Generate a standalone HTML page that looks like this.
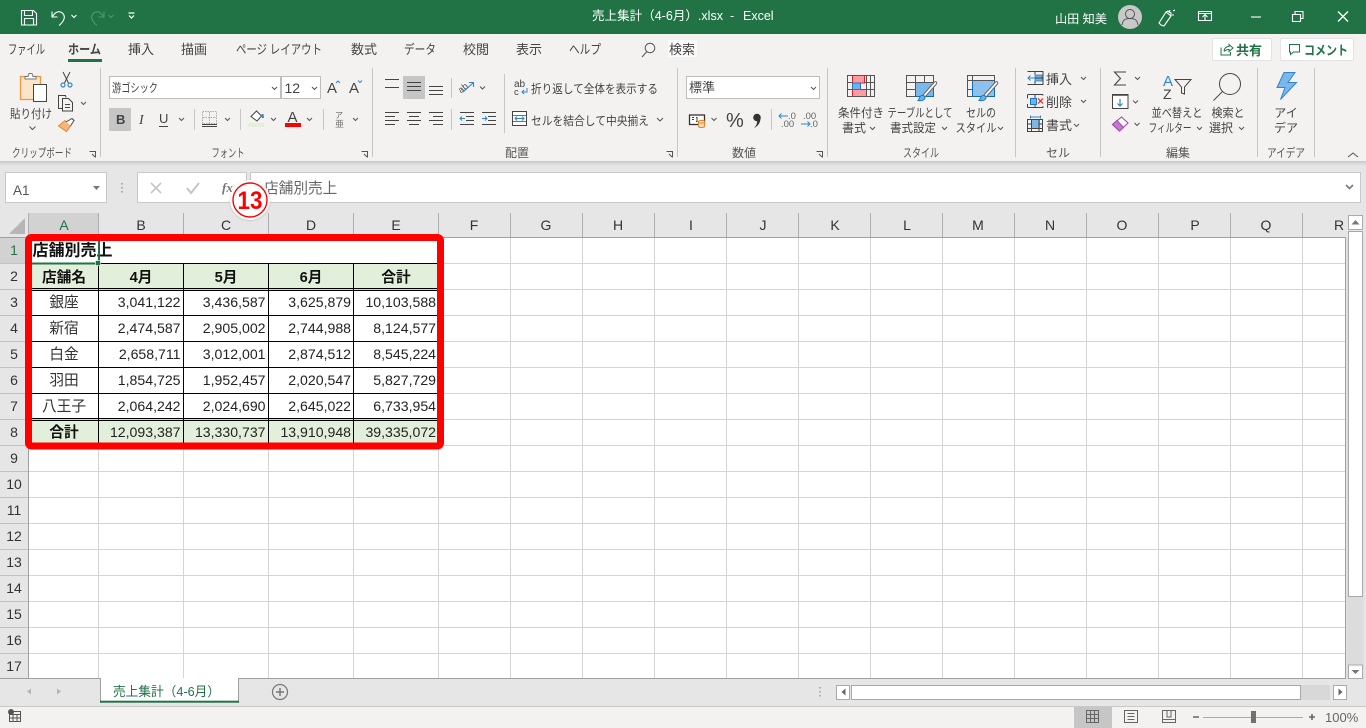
<!DOCTYPE html>
<html lang="ja"><head><meta charset="utf-8"><title>売上集計（4-6月）.xlsx - Excel</title>
<style>
html,body{margin:0;padding:0;width:1366px;height:728px;overflow:hidden;background:#fff}
svg{display:block}
text{font-family:"Liberation Sans","Noto Sans CJK JP",sans-serif;white-space:pre}
.r{font-size:12px;fill:#444}
.t{font-size:13px;fill:#444}
.g{font-size:12px;fill:#555;text-anchor:middle}
.m{font-size:12px;fill:#444;text-anchor:middle}
.h{font-size:14px;fill:#333;text-anchor:middle}
.rh{font-size:14px;fill:#333;text-anchor:middle}
.n{font-size:14.1px;fill:#222;text-anchor:end}
.c{font-size:14.67px;fill:#333;text-anchor:middle}
.b{font-size:14.67px;fill:#111;text-anchor:middle;font-weight:bold}
.w{fill:#fff;font-size:12px}
.l{stroke:#444;stroke-width:1;fill:none}
.v{stroke:#555;stroke-width:1;fill:none}
</style></head><body>
<svg width="1366" height="728" viewBox="0 0 1366 728" xmlns="http://www.w3.org/2000/svg">
<defs><linearGradient id="sh" x1="0" y1="0" x2="0" y2="1"><stop offset="0" stop-color="#c9c9c9"/><stop offset="1" stop-color="#e6e6e6"/></linearGradient>
<filter id="bl" x="-30%" y="-30%" width="160%" height="160%"><feGaussianBlur stdDeviation="1"/></filter></defs>
<!-- backgrounds -->
<rect width="1366" height="728" fill="#fff"/>
<rect y="0" width="1366" height="34" fill="#217346"/>
<rect y="34" width="1366" height="127" fill="#f3f2f1"/>
<rect y="161" width="1366" height="52" fill="#e6e6e6"/>
<rect y="161" width="1366" height="5" fill="url(#sh)"/>
<rect y="213" width="1366" height="24" fill="#e6e6e6"/>

<!-- title bar -->
<g fill="none" stroke="#fff" stroke-width="1.1">
<path d="M21.5 10.5h12l3 3v11.500h-15zM24.500 10.500v5h8v-5M24.500 25v-6.500h9V25"/>
<path d="M52 11.500v5.500h5.500M52.500 16.500c2.500-4 5.500-5.500 8-4.500 3 1 4.500 4 3.500 7-.7 2-2.500 4.500-5 6.500"/>
<path d="M71.500 15l2.500 2.500 2.500-2.500"/>
<g stroke="#4f9a6f"><path d="M104 11.500v5.500h-5.500M103.500 16.500c-2.500-4-5.500-5.500-8-4.500-3 1-4.500 4-3.500 7 .7 2 2.500 4.500 5 6.500"/><path d="M108.500 15l2.500 2.500 2.500-2.500"/></g>
<path d="M128.500 13h6M129 15.500l2.500 2.500 2.500-2.500" stroke-width="1.200"/>
</g>
<text x="592" y="20" fill="#fff" font-size="12.500" textLength="131" lengthAdjust="spacingAndGlyphs">売上集計（4-6月）.xlsx</text>
<text x="730" y="20" fill="#fff" font-size="12.500">-</text>
<text x="743" y="20" fill="#fff" font-size="12.500">Excel</text>
<text x="1055" y="23" class="w" textLength="52" lengthAdjust="spacingAndGlyphs">山田 知美</text>
<circle cx="1130" cy="17" r="12" fill="#c8c8c8"/>
<circle cx="1130" cy="14" r="4.500" fill="none" stroke="#555" stroke-width="1"/>
<path d="M1122 25c1-6 4-6.500 8-6.500s7 .5 8 6.500" fill="none" stroke="#555"/>
<g fill="none" stroke="#fff" stroke-width="1.100">
<path d="M1161 25l-2-2 7-11 5 4-7 10zM1166 12l2-1 3 2 0 3M1169 13l1-3M1173 11l2-1M1172 15l2 0"/>
<path d="M1198.500 11.500h13v9h-13zM1198.500 13.500h13M1205 20v-5M1202.500 17l2.500-2.500 2.500 2.500"/>
<path d="M1251 17h10" />
<path d="M1292.500 14.500h8v7h-8zM1295 14.500v-3h8v7h-2.500"/>
<path d="M1338 11.500l10 10M1348 11.500l-10 10" stroke-width="1.300"/>
</g>

<!-- tabs -->
<text x="8" y="54" class="t" textLength="37" lengthAdjust="spacingAndGlyphs">ファイル</text>
<text x="68" y="54" class="t" font-weight="bold" textLength="33" lengthAdjust="spacingAndGlyphs">ホーム</text>
<rect x="68" y="59" width="34" height="3" fill="#217346"/>
<text x="128" y="54" class="t">挿入</text>
<text x="181" y="54" class="t">描画</text>
<text x="236" y="54" class="t" textLength="86" lengthAdjust="spacingAndGlyphs">ページ レイアウト</text>
<text x="351" y="54" class="t">数式</text>
<text x="404" y="54" class="t" textLength="32" lengthAdjust="spacingAndGlyphs">データ</text>
<text x="463" y="54" class="t">校閲</text>
<text x="516" y="54" class="t">表示</text>
<text x="569" y="54" class="t" textLength="32" lengthAdjust="spacingAndGlyphs">ヘルプ</text>
<circle cx="650" cy="48" r="4.800" fill="none" stroke="#555"/><path d="M646.500 52l-4.500 5" stroke="#555" fill="none"/>
<rect x="668" y="40" width="29" height="17" fill="#fafafa"/>
<text x="669" y="54" class="t">検索</text>
<!-- share/comment -->
<rect x="1212.500" y="38.500" width="59" height="22" fill="#fff" stroke="#e3e3e3" rx="1"/>
<rect x="1280.500" y="38.500" width="73" height="22" fill="#fff" stroke="#e3e3e3" rx="1"/>
<path d="M1221 47.500v7.500h9.500v-3M1224 51c.5-3 2.500-4.500 5-4.500v-2l4 3.500-4 3.500v-2c-2 0-3.500 .5-5 2" fill="none" stroke="#217346"/>
<text x="1236" y="55" font-size="13" font-weight="bold" fill="#217346">共有</text>
<path d="M1289.500 44.500h10v7.500h-6l-3 2.500v-2.500h-1z" fill="none" stroke="#217346"/>
<text x="1304" y="55" font-size="13" font-weight="bold" fill="#217346" textLength="44" lengthAdjust="spacingAndGlyphs">コメント</text>

<!-- separators -->
<g stroke="#c8c6c4"><path d="M100.500 68v89M372.500 68v89M677.500 68v89M827.500 68v89M1015.500 68v89M1100.500 68v89M1257.500 68v89M1314.500 68v89M194.500 109v21M240.500 109v21M323.500 109v21M504.500 74v59M771.500 109v21M451.500 78v20M451.500 109v21"/></g>

<!-- clipboard -->
<rect x="20.500" y="76.500" width="20" height="23" fill="#fbe4c8" stroke="#ed9a3f" stroke-width="1.300"/>
<path d="M25 76.500h3l1-3h3l1 3h3v2.500H25z" fill="#fff" stroke="#777"/>
<rect x="33.500" y="84.500" width="13" height="17" fill="#fff" stroke="#444"/>
<text x="10" y="118" class="r" textLength="42" lengthAdjust="spacingAndGlyphs">貼り付け</text>
<path class="v" d="M29.500 126.500l3 3 3-3"/>
<g fill="none" stroke="#444"><path d="M63 72l5.500 11M70 72l-5.500 11"/></g>
<g fill="none" stroke="#2e86cf" stroke-width="1.200"><circle cx="63" cy="85" r="2"/><circle cx="70" cy="85" r="2"/></g>
<path class="l" d="M62 108.500h-3.500v-13h7l.5 2M62.500 98.500h6l4 4v8.500h-10zM65 104.500h5M65 107.500h5"/>
<path class="v" d="M81 102l2.500 2.500 2.500-2.500"/>
<path d="M58.500 126l6.500-5.500 5.500 5.500-4 5.500z" fill="#f5b77b" stroke="#e8892b"/>
<path d="M66 122l6-3.500 2 2-3.500 5.500" fill="#fff" stroke="#444"/>
<text x="42" y="157" class="g" textLength="60" lengthAdjust="spacingAndGlyphs">クリップボード</text>
<g class="v"><path d="M89.500 151.500h6v6M92 154l3 3"/><path d="M361.500 151.500h6v6M364 154l3 3M666.500 151.500h6v6M669 154l3 3M816.500 151.500h6v6M819 154l3 3"/></g>

<!-- font -->
<rect x="109.500" y="76.500" width="171" height="22" fill="#fff" stroke="#bdbdbd"/>
<rect x="281.500" y="76.500" width="39" height="22" fill="#fff" stroke="#bdbdbd"/>
<text x="112" y="92" class="r" textLength="46" lengthAdjust="spacingAndGlyphs">游ゴシック</text>
<text x="284.500" y="93" font-size="14" fill="#444">12</text>
<path class="v" d="M272 87l2.500 2.500 2.500-2.500M312 87l2.500 2.500 2.500-2.500"/>
<text x="327" y="93" font-size="15" fill="#444">A</text><path d="M336 83l2-2 2 2" fill="none" stroke="#2e86cf"/>
<text x="349" y="93" font-size="15" fill="#444">A</text><path d="M358 80.500l2 2 2-2" fill="none" stroke="#2e86cf"/>
<rect x="109" y="108" width="22" height="23" fill="#c6c6c6"/>
<text x="116" y="124" font-size="13" font-weight="bold" fill="#444">B</text>
<text x="139" y="124" font-size="14" font-style="italic" fill="#444" style="font-family:'Liberation Serif',serif">I</text>
<text x="159" y="123" font-size="13" fill="#444">U</text><path d="M159 126.500h9" stroke="#444"/>
<path class="v" d="M179 118l2.500 2.500 2.500-2.500M225 118l2.500 2.500 2.500-2.500M271 118l2.500 2.500 2.500-2.500M307 118l2.500 2.500 2.500-2.500M353 118l2.500 2.500 2.500-2.500"/>
<path d="M202.500 111.500h14v12h-14zM209.500 112v11M203 117.500h13" fill="none" stroke="#aaa" stroke-dasharray="1.500 1"/>
<path d="M202 124.500h15M202 126.500h15" stroke="#444"/>
<path d="M251 116.500l5.500-5.500 5 5-4.500 5z" fill="#fff" stroke="#444"/><path d="M262.500 114l.5 4" stroke="#2e86cf" stroke-width="2"/>
<rect x="248" y="123" width="16" height="4" fill="#e2efda"/>
<text x="287.500" y="122" font-size="15" fill="#444">A</text><rect x="285" y="123" width="16" height="4" fill="#f00"/>
<text x="335" y="118" font-size="8" fill="#666">ア</text><text x="335" y="127" font-size="9" fill="#777">亜</text>
<text x="228" y="157" class="g" textLength="33" lengthAdjust="spacingAndGlyphs">フォント</text>

<!-- alignment -->
<rect x="403" y="76" width="22" height="23" fill="#c6c6c6"/>
<g stroke="#444"><path d="M385 79.500h14M385 87.500h14M407 82.500h14M407 86.500h14M407 90.500h14M429 86.500h14M429 90.500h14M429 94.500h14"/>
<path d="M385 112.500h14M385 116.500h10M385 120.500h14M385 124.500h10M407 112.500h14M409 116.500h10M407 120.500h14M409 124.500h10M429 112.500h14M433 116.500h10M429 120.500h14M433 124.500h10"/>
<path d="M460 112.500h14M466 116.500h8M466 120.500h8M460 124.500h14M482 112.500h14M488 116.500h8M488 120.500h8M482 124.500h14"/></g>
<path d="M465 118.500h-5M462 116.500l-2 2 2 2M482 118.500h5M485 116.500l2 2-2 2" fill="none" stroke="#2e86cf"/>
<text x="459" y="92" font-size="9" fill="#444" transform="rotate(-40 462 90)">ab</text>
<path d="M463 92l10-9M469 82.500h4.500v4.500" fill="none" stroke="#2e86cf" stroke-width="1.100"/>
<path class="v" d="M480 86.500l2.500 2.500 2.500-2.500"/>
<text x="514" y="87" font-size="10" fill="#444">ab</text><text x="514" y="95" font-size="9.500" fill="#444">c</text>
<path d="M527 88v4h-5M524 90l-2 2 2 2" fill="none" stroke="#2e86cf"/>
<text x="531" y="93" class="r" textLength="127" lengthAdjust="spacingAndGlyphs">折り返して全体を表示する</text>
<rect x="512.500" y="111.500" width="14" height="14" fill="#fff" stroke="#444"/>
<path d="M513 115.500h13M513 121.500h13" stroke="#2e86cf"/><path d="M515 118.500h9M517 116.500l-2 2 2 2M522 116.500l2 2-2 2" fill="none" stroke="#2e86cf"/>
<text x="531" y="125" class="r" textLength="118" lengthAdjust="spacingAndGlyphs">セルを結合して中央揃え</text>
<path class="v" d="M657 118l3 3 3-3"/>
<text x="517" y="157" class="g">配置</text>

<!-- number -->
<rect x="686.500" y="76.500" width="133" height="22" fill="#fff" stroke="#bdbdbd"/>
<text x="689" y="92" font-size="13" fill="#444">標準</text>
<path class="v" d="M811 87l2.500 2.500 2.500-2.500"/>
<rect x="689.500" y="115" width="15" height="9.500" fill="#fff" stroke="#333" stroke-width="1.300"/>
<path d="M692 117.500h2M696 117.500h1v4h-1M692 119.500h2" stroke="#444" fill="none"/>
<rect x="698.500" y="120.500" width="6" height="7" rx="1.500" fill="#fbd9b5" stroke="#e8892b"/><path d="M698.500 123h6" stroke="#e8892b"/>
<path class="v" d="M711.500 118l2.500 2.500 2.500-2.500"/>
<text x="726" y="127" font-size="20" fill="#444">%</text>
<circle cx="757" cy="117.500" r="3.800" fill="#333"/><path d="M760.500 117c.3 5-2 9-6.500 11 2.500-2.500 3.500-5 3-8z" fill="#333"/>
<text x="788" y="119" font-size="9.500" fill="#666">.0</text><text x="781" y="127" font-size="9.500" fill="#666">.00</text>
<path d="M779 116h9M781.500 113.500l-2.500 2.500 2.500 2.500" fill="none" stroke="#2e86cf"/>
<text x="803" y="119" font-size="9.500" fill="#666">.00</text><text x="810" y="127" font-size="9.500" fill="#666">.0</text>
<path d="M801 124h9M807.500 121.500l2.500 2.500-2.500 2.500" fill="none" stroke="#2e86cf"/>
<text x="744" y="157" class="g">数値</text>

<!-- styles -->
<rect x="852.500" y="75.500" width="12" height="7.500" fill="#ff9aa2" stroke="#d22"/><rect x="852.500" y="89.500" width="14" height="7" fill="#ff9aa2" stroke="#d22"/>
<rect x="852.500" y="83" width="8" height="6.500" fill="#6fb3e6" stroke="#1f78c4"/>
<path d="M847.500 75.500h27v21h-27zM847.500 82.500h5M865 82.500h9.500M847.500 89.500h5M861 89.500h13.500M866.500 75.500v21M870.500 75.500v21" fill="none" stroke="#555"/>
<text x="861" y="117" class="m" textLength="46" lengthAdjust="spacingAndGlyphs">条件付き</text>
<text x="854" y="132" class="m">書式</text><path class="v" d="M870 127l2.500 2.500 2.500-2.500"/>
<rect x="915.500" y="82.500" width="18" height="14" fill="#7ab8ea" stroke="#0f6cbd"/>
<path d="M906.500 75.500h27v7h-27zM906.500 82.500v14h9M906.500 89.500h9M915.500 75.500v21M924.500 75.500v7" fill="none" stroke="#555"/>
<path d="M923 95l11-12.500c1-1 2-1 2.500-.5s.5 1.500-.5 2.500L925 97z" fill="#fff" stroke="#666"/>
<path d="M918 100.500c3 .5 6 .5 7-2.500.3-1.500-1-2.500-3-2.500-2.500 0-2 3-4 5z" fill="#6fb3e6" stroke="#1f78c4"/>
<text x="920" y="117" class="m" textLength="65" lengthAdjust="spacingAndGlyphs">テーブルとして</text>
<text x="913" y="132" class="m" textLength="46" lengthAdjust="spacingAndGlyphs">書式設定</text><path class="v" d="M942 127l2.500 2.500 2.500-2.500"/>
<rect x="972.500" y="80.500" width="22" height="16" fill="#8cc1ee" stroke="#0f6cbd"/>
<path d="M967.500 75.500h27v5h-27zM967.500 80.500v16h5M967.500 89.500h5M972.500 75.500v5" fill="none" stroke="#555"/>
<path d="M984 95l11-12.500c1-1 2-1 2.500-.5s.5 1.500-.5 2.500L986 97z" fill="#fff" stroke="#666"/>
<path d="M979 100.500c3 .5 6 .5 7-2.500.3-1.500-1-2.500-3-2.500-2.500 0-2 3-4 5z" fill="#6fb3e6" stroke="#1f78c4"/>
<text x="981" y="117" class="m" textLength="30" lengthAdjust="spacingAndGlyphs">セルの</text>
<text x="976" y="132" class="m" textLength="41" lengthAdjust="spacingAndGlyphs">スタイル</text><path class="v" d="M998 127l2.500 2.500 2.500-2.500"/>
<text x="921" y="157" class="g" textLength="36" lengthAdjust="spacingAndGlyphs">スタイル</text>

<!-- cells -->
<rect x="1035" y="75" width="7" height="6" fill="#6fb3e6" stroke="#1f78c4" stroke-width=".7"/>
<path d="M1027.500 71.500h15.500v13h-15.500M1033 78h10M1035 71.500v3M1035 81v3.500" fill="none" stroke="#444"/>
<path d="M1035 78h-7M1030.500 75.500l-2.500 2.500 2.500 2.500" fill="none" stroke="#2e86cf"/>
<text x="1046" y="84" font-size="13" fill="#444">挿入</text><path class="v" d="M1081 77l2.500 2.500 2.500-2.500"/>
<path d="M1027.500 94.500h15.500M1027.500 107.500h15.500M1027.500 94.500v4M1027.500 104v3.500M1035 94.500v4M1035 104v3.500M1043 94.500v1M1043 106v1.500" fill="none" stroke="#444"/>
<rect x="1030.500" y="98.500" width="6" height="6" fill="#6fb3e6" stroke="#1f78c4"/>
<path d="M1038 98.500l5 5M1043 98.500l-5 5" stroke="#e33" stroke-width="1.300"/>
<text x="1046" y="107" font-size="13" fill="#444">削除</text><path class="v" d="M1081 100l2.500 2.500 2.500-2.500"/>
<rect x="1031" y="120" width="9" height="9" fill="#7ab8ea"/>
<path d="M1027.500 119.500h15v12h-15zM1027.500 124h4M1039 124h3.500M1027.500 128.500h15M1031.500 119.500v12M1039 119.500v12" fill="none" stroke="#444"/>
<path d="M1030.500 117h10M1030.500 115.500v3M1040.500 115.500v3" stroke="#2e86cf" fill="none"/>
<text x="1046" y="130" font-size="13" fill="#444">書式</text><path class="v" d="M1074 124l2.500 2.500 2.500-2.500"/>
<text x="1058" y="157" class="g">セル</text>

<!-- editing -->
<path d="M1126 72h-11.500l6 6.500-6 6.500h11.500" fill="none" stroke="#444" stroke-width="1.100"/>
<path class="v" d="M1135 77l2.500 2.500 2.500-2.500"/>
<rect x="1112.500" y="94.500" width="15.500" height="14" fill="#fff" stroke="#444"/><path d="M1112 95h16.500" stroke="#444" stroke-width="1.500"/>
<path d="M1120 99v7M1117.500 103.500l2.500 2.500 2.500-2.500" fill="none" stroke="#2e86cf" stroke-width="1.200"/>
<path class="v" d="M1133 100.500l2.500 2.500 2.500-2.500"/>
<path d="M1112.500 124.500l9-7.500 6.500 6-8.500 8z" fill="#fff" stroke="#a34cb0" stroke-width="1.100"/><path d="M1112.500 124.500l4.500-4 6.500 7-4 3.500z" fill="#c478cf" stroke="#a34cb0" stroke-width="1.100"/>
<path class="v" d="M1134.500 123l2.500 2.500 2.500-2.500"/>
<text x="1163" y="86" font-size="15" fill="#2e86cf">A</text><text x="1163" y="99" font-size="14" fill="#444">Z</text>
<path d="M1175 79.500h16l-6.500 7.500v7l-3-1v-6z" fill="none" stroke="#444"/>
<text x="1177" y="117" class="m" textLength="51" lengthAdjust="spacingAndGlyphs">並べ替えと</text>
<text x="1170" y="132" class="m" textLength="43" lengthAdjust="spacingAndGlyphs">フィルター</text><path class="v" d="M1197 127l2.500 2.500 2.500-2.500"/>
<circle cx="1230" cy="84" r="10.500" fill="none" stroke="#444"/><path d="M1222.500 91.500l-9 9" stroke="#444" fill="none"/>
<text x="1228" y="117" class="m" textLength="33" lengthAdjust="spacingAndGlyphs">検索と</text>
<text x="1221" y="132" class="m">選択</text><path class="v" d="M1239 127l2.500 2.500 2.500-2.500"/>
<text x="1178" y="157" class="g">編集</text>

<!-- ideas -->
<path d="M1284 72.500h11l-7 10h8.500l-16 17 4.500-12h-8z" fill="#7ab8ea" stroke="#2e86cf"/>
<text x="1286" y="117" class="m">アイ</text><text x="1286" y="132" class="m">デア</text>
<text x="1286" y="157" class="g" textLength="38" lengthAdjust="spacingAndGlyphs">アイデア</text>
<path d="M1348 157l5-4 5 4" fill="none" stroke="#555"/>

<!-- formula bar -->
<rect x="5.500" y="172.500" width="101" height="30" fill="#fff" stroke="#c8c8c8"/>
<text x="13" y="195" font-size="13.500" fill="#555">A1</text>
<path d="M93 186h7l-3.500 4z" fill="#777"/>
<path d="M122 183v1.500M122 187v1.500M122 191v1.500" stroke="#999" stroke-width="1.500"/>
<rect x="137.500" y="172.500" width="109" height="30" fill="#fff" stroke="#c8c8c8"/>
<rect x="250.500" y="172.500" width="1110" height="30" fill="#fff" stroke="#c8c8c8"/>
<path d="M151 183l10 10M161 183l-10 10" stroke="#c4c4c4" stroke-width="1.600"/>
<path d="M187 188l4 5 8-10" fill="none" stroke="#c4c4c4" stroke-width="2"/>
<text x="222" y="192" font-size="13" font-style="italic" font-weight="bold" fill="#777" style="font-family:'Liberation Serif',serif">fx</text>
<text x="264" y="193" font-size="14.670" fill="#666">店舗別売上</text>
<path d="M1346 185l3.500 3.500 3.500-3.500" fill="none" stroke="#777" stroke-width="1.600"/>

<!-- column headers -->
<rect x="29" y="213" width="70" height="24" fill="#d2d2d2"/>
<path d="M9 234l16-16v16z" fill="#b6b6b6"/>
<g stroke="#afafaf"><path d="M28.500 213v24M98.500 213v24M183.500 213v24M268.500 213v24M353.500 213v24M438.500 213v24M510.500 213v24M582.500 213v24M654.500 213v24M726.500 213v24M798.500 213v24M870.500 213v24M942.500 213v24M1014.500 213v24M1086.500 213v24M1158.500 213v24M1230.500 213v24M1302.500 213v24"/></g>
<text x="64" y="230" class="h" style="fill:#217346">A</text>
<text x="141" y="230" class="h">B</text><text x="226" y="230" class="h">C</text><text x="311" y="230" class="h">D</text><text x="396" y="230" class="h">E</text>
<text x="474" y="230" class="h">F</text><text x="546" y="230" class="h">G</text><text x="618" y="230" class="h">H</text><text x="691" y="230" class="h">I</text><text x="763" y="230" class="h">J</text><text x="835" y="230" class="h">K</text><text x="907" y="230" class="h">L</text><text x="978" y="230" class="h">M</text><text x="1050" y="230" class="h">N</text><text x="1122" y="230" class="h">O</text><text x="1195" y="230" class="h">P</text><text x="1266" y="230" class="h">Q</text><text x="1339" y="230" class="h">R</text>

<!-- row headers -->
<rect x="0" y="237" width="28" height="442" fill="#e6e6e6"/>
<rect x="0" y="237" width="28" height="26" fill="#d2d2d2"/>
<g stroke="#c2c2c2"><path d="M0 263.500h28M0 289.500h28M0 315.500h28M0 341.500h28M0 367.500h28M0 393.500h28M0 419.500h28M0 445.500h28M0 471.500h28M0 497.500h28M0 523.500h28M0 549.500h28M0 575.500h28M0 601.500h28M0 627.500h28M0 653.500h28"/></g>
<text x="14" y="255" class="rh" style="fill:#217346">1</text><text x="14" y="281" class="rh">2</text><text x="14" y="307" class="rh">3</text><text x="14" y="333" class="rh">4</text><text x="14" y="359" class="rh">5</text><text x="14" y="385" class="rh">6</text><text x="14" y="411" class="rh">7</text><text x="14" y="437" class="rh">8</text><text x="14" y="463" class="rh">9</text><text x="14" y="489" class="rh">10</text><text x="14" y="515" class="rh">11</text><text x="14" y="541" class="rh">12</text><text x="14" y="567" class="rh">13</text><text x="14" y="593" class="rh">14</text><text x="14" y="619" class="rh">15</text><text x="14" y="645" class="rh">16</text><text x="14" y="671" class="rh">17</text>

<!-- grid -->
<g stroke="#d4d4d4"><path d="M98.500 237v442M183.500 237v442M268.500 237v442M353.500 237v442M438.500 237v442M510.500 237v442M582.500 237v442M654.500 237v442M726.500 237v442M798.500 237v442M870.500 237v442M942.500 237v442M1014.500 237v442M1086.500 237v442M1158.500 237v442M1230.500 237v442M1302.500 237v442"/>
<path d="M29 263.500h1316M29 289.500h1316M29 315.500h1316M29 341.500h1316M29 367.500h1316M29 393.500h1316M29 419.500h1316M29 445.500h1316M29 471.500h1316M29 497.500h1316M29 523.500h1316M29 549.500h1316M29 575.500h1316M29 601.500h1316M29 627.500h1316M29 653.500h1316"/></g>
<path d="M0 237.500h1345.500M28.500 237v442M1345.500 237v442" stroke="#a0a0a0" fill="none"/>

<!-- table -->
<rect x="29" y="263" width="410" height="26" fill="#e2efda"/>
<rect x="29" y="420" width="410" height="25" fill="#e2efda"/>
<rect x="29" y="237" width="410" height="26" fill="#fff"/>
<rect x="29" y="290" width="410" height="129" fill="#fff"/>
<g stroke="#000"><path d="M29 263.500h410M29 288.500h410M29 290.500h410M29 315.500h410M29 341.500h410M29 367.500h410M29 393.500h410M29 418.500h410M29 420.500h410M29 445.500h410"/>
<path d="M98.500 263v182M183.500 263v182M268.500 263v182M353.500 263v182"/></g>
<text x="32.500" y="255.500" font-size="16" font-weight="bold" fill="#111">店舗別売上</text>
<text x="64" y="282" class="b">店舗名</text><text x="141" y="282" class="b">4月</text><text x="226" y="282" class="b">5月</text><text x="311" y="282" class="b">6月</text><text x="396" y="282" class="b">合計</text>
<text x="64" y="307" class="c">銀座</text><text x="64" y="333" class="c">新宿</text><text x="64" y="359" class="c">白金</text><text x="64" y="385" class="c">羽田</text><text x="64" y="411" class="c">八王子</text><text x="64" y="437" class="b">合計</text>
<text x="180.500" y="307" class="n">3,041,122</text><text x="265.500" y="307" class="n">3,436,587</text><text x="351" y="307" class="n">3,625,879</text><text x="436" y="307" class="n">10,103,588</text>
<text x="180.500" y="333" class="n">2,474,587</text><text x="265.500" y="333" class="n">2,905,002</text><text x="351" y="333" class="n">2,744,988</text><text x="436" y="333" class="n">8,124,577</text>
<text x="180.500" y="359" class="n">2,658,711</text><text x="265.500" y="359" class="n">3,012,001</text><text x="351" y="359" class="n">2,874,512</text><text x="436" y="359" class="n">8,545,224</text>
<text x="180.500" y="385" class="n">1,854,725</text><text x="265.500" y="385" class="n">1,952,457</text><text x="351" y="385" class="n">2,020,547</text><text x="436" y="385" class="n">5,827,729</text>
<text x="180.500" y="411" class="n">2,064,242</text><text x="265.500" y="411" class="n">2,024,690</text><text x="351" y="411" class="n">2,645,022</text><text x="436" y="411" class="n">6,733,954</text>
<text x="180.500" y="437" class="n">12,093,387</text><text x="265.500" y="437" class="n">13,330,737</text><text x="351" y="437" class="n">13,910,948</text><text x="436" y="437" class="n">39,335,072</text>

<!-- selection -->
<path d="M32 263.500h66" stroke="#217346" stroke-width="2" fill="none"/>
<path d="M99 241v21" stroke="#217346" stroke-width="2" fill="none"/>
<rect x="95.500" y="260.500" width="5" height="5" fill="#217346" stroke="#fff" stroke-width=".6"/>

<!-- red box -->
<rect x="28.500" y="237.500" width="412" height="208.500" rx="3" fill="none" stroke="#f00" stroke-width="7"/>

<!-- callout -->
<circle cx="250" cy="200.500" r="20" fill="#000" opacity=".18" filter="url(#bl)"/>
<circle cx="250" cy="200" r="20" fill="#fff"/>
<circle cx="250" cy="200" r="17" fill="#fff" stroke="#f00" stroke-width="1.400"/>
<text x="237.500" y="209" font-size="25" font-weight="bold" fill="#f00" textLength="25" lengthAdjust="spacingAndGlyphs">13</text>

<!-- vertical scrollbar -->
<rect x="1346" y="213" width="20" height="466" fill="#e6e6e6"/>
<rect x="1346.500" y="238" width="17" height="441" fill="#dcdcdc"/>
<rect x="1348.500" y="215.500" width="14" height="14" fill="#fff" stroke="#aaa"/><path d="M1351.500 224.500h8l-4-4.500z" fill="#777"/>
<rect x="1348.500" y="231.500" width="14" height="365" fill="#fff" stroke="#a8a8a8"/>
<rect x="1348.500" y="665" width="14" height="13.500" fill="#fff" stroke="#aaa"/><path d="M1351.500 670h8l-4 4z" fill="#777"/>

<!-- sheet tab bar -->
<rect y="679" width="1366" height="27" fill="#e6e6e6"/>
<path d="M0 678.500h1346" stroke="#9f9f9f"/>
<rect x="100.500" y="678" width="138" height="24" fill="#fff"/>
<path d="M100.500 703v-25M238.500 703v-25" stroke="#9f9f9f"/>
<rect x="100" y="700.700" width="139" height="2" fill="#217346"/>
<path d="M31 688.500v6l-4-3zM57 688.500v6l4-3z" fill="#b5b5b5"/>
<text x="113" y="696" font-size="13" fill="#217346" textLength="107" lengthAdjust="spacingAndGlyphs">売上集計（4-6月）</text>
<circle cx="280" cy="692" r="7.500" fill="none" stroke="#777" stroke-width="1.200"/><path d="M276 692h8M280 688v8" stroke="#777" stroke-width="1.500"/>
<path d="M820 687v1.500M820 691v1.500M820 695v1.500" stroke="#999" stroke-width="1.400"/>
<rect x="836.500" y="685.500" width="13" height="14" fill="#fff" stroke="#aaa"/><path d="M845.500 688.500v7l-4-3.500z" fill="#666"/>
<rect x="1300" y="685" width="30" height="15" fill="#d8d8d8"/>
<rect x="851.500" y="685.500" width="449" height="14" fill="#fff" stroke="#a8a8a8"/>
<rect x="1333.500" y="685.500" width="13" height="14" fill="#fff" stroke="#aaa"/><path d="M1338.500 688.500v7l4-3.500z" fill="#666"/>

<!-- status bar -->
<rect y="706" width="1366" height="22" fill="#f3f2f1"/>
<path d="M0 706.500h1366" stroke="#c9c9c9"/>
<circle cx="11" cy="712" r="3" fill="#555"/>
<path d="M9.500 711.500h11v10h-11zM9.500 714.500h11M13 715v6M17 715v6M10 718h10" fill="none" stroke="#555"/>
<rect x="1074" y="707" width="38" height="21" fill="#c6c6c6"/>
<path d="M1086.500 710.500h12v12h-12zM1086.500 714.500h12M1086.500 718.500h12M1090.500 710.500v12M1094.500 710.500v12" fill="none" stroke="#666"/>
<path d="M1124.500 710.500h13v12h-13zM1127.500 713.500h7M1127.500 716.500h7M1127.500 719.500h7" fill="none" stroke="#666"/>
<path d="M1162.500 710.500h13v12h-13zM1162.500 719.500h13M1167 710.500v6.500h4v-6.500" fill="none" stroke="#666"/>
<path d="M1193 717h6M1309 717h6M1312 714v6" stroke="#666" stroke-width="1.600"/>
<path d="M1203 717.500h100" stroke="#aaa"/>
<rect x="1251" y="711" width="5" height="12" fill="#707070"/>
<text x="1325" y="722" font-size="13" fill="#666">100%</text>
</svg>
</body></html>
